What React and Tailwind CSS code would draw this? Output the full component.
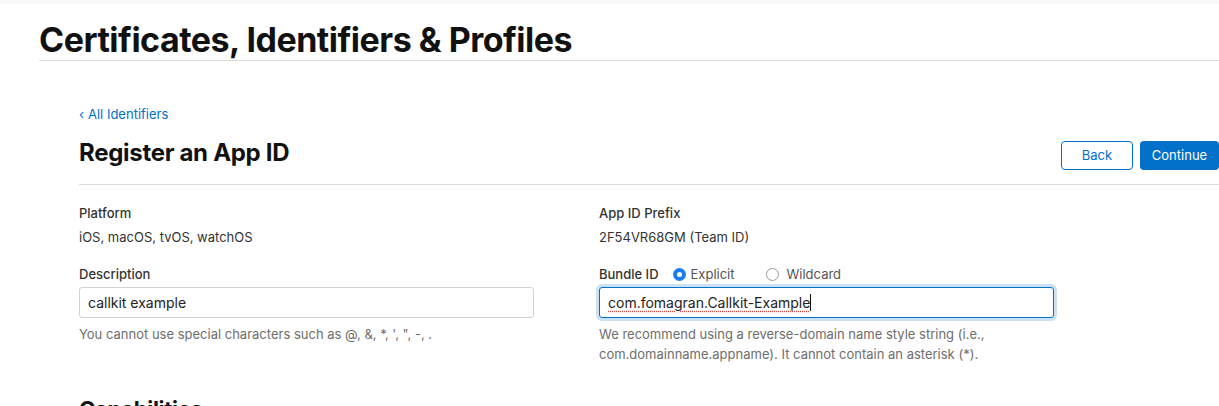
export default function App() {
  return (
    <div className="w-[1219px] h-[406px] overflow-hidden bg-white font-['Inter',sans-serif] text-[#333]">
      <div className="h-[4px] bg-[#f9f9f9]" />
      <div className="pl-[39px]">
        <h1 className="text-[34px] font-bold tracking-[-0.5px] text-[#111] leading-[40px] pt-[16px] pb-[0px]">
          Certificates, Identifiers &amp; Profiles
        </h1>
        <div className="h-px bg-[#dcdcdc]" />
      </div>
      <div className="pl-[79px]">
        <div className="pt-[44px] text-[13px] leading-[18px] text-[#0070c9]">
          <span className="mr-[4px]">‹</span>All Identifiers
        </div>
        <div className="flex items-center justify-between mt-[12px] h-[36px]">
          <h2 className="text-[24px] font-bold text-[#111] tracking-[-0.3px]">Register an App ID</h2>
          <div className="flex gap-[7px] pt-[5px]">
            <button className="w-[72px] h-[29px] rounded-[4px] border border-[#0070c9] text-[#0070c9] text-[13px] bg-white">
              Back
            </button>
            <button className="w-[79px] h-[29px] rounded-[4px] bg-[#0070c9] text-white text-[13px]">
              Continue
            </button>
          </div>
        </div>
        <div className="h-px bg-[#dcdcdc] mt-[13px]" />
        <div className="grid grid-cols-[520px_1fr] pt-[19px]">
          <div>
            <div className="text-[13px] leading-[18px] font-medium text-[#333]">Platform</div>
            <div className="text-[13px] leading-[18px] mt-[6px] text-[#333]">iOS, macOS, tvOS, watchOS</div>
            <div className="text-[13px] leading-[18px] font-medium mt-[19px]">Description</div>
            <div className="mt-[4px] w-[455px] h-[31px] rounded-[3px] border border-[#d2d2d7] flex items-center px-[8px] text-[14px] text-[#222]">
              callkit example
            </div>
            <div className="mt-[6px] text-[13px] leading-[20px] text-[#6e6e6e]">
              You cannot use special characters such as @, &amp;, *, ', ", -, .
            </div>
          </div>
          <div>
            <div className="text-[13px] leading-[18px] font-medium text-[#333]">App ID Prefix</div>
            <div className="text-[13px] leading-[18px] mt-[6px] text-[#333]">2F54VR68GM (Team ID)</div>
            <div className="flex items-center text-[13px] leading-[18px] mt-[19px]">
              <span className="font-medium">Bundle ID</span>
              <span className="ml-[14px] w-[13px] h-[13px] rounded-full bg-[#1a7cf0] flex items-center justify-center">
                <span className="w-[5px] h-[5px] rounded-full bg-white" />
              </span>
              <span className="ml-[5px] text-[#555]">Explicit</span>
              <span className="ml-[31px] w-[13px] h-[13px] rounded-full border border-[#9a9a9a] bg-white" />
              <span className="ml-[8px] text-[#555]">Wildcard</span>
            </div>
            <div className="mt-[4px] w-[455px] h-[31px] rounded-[3px] border border-[#0070c9] shadow-[0_0_0_3px_rgba(0,112,201,0.2)] flex items-center px-[8px] text-[14px] text-[#222]">
              <span className="underline decoration-dotted decoration-[#e0443e] underline-offset-[3px]">com.fomagran.Callkit-Example</span>
              <span className="w-px h-[17px] bg-[#111]" />
            </div>
            <div className="mt-[6px] text-[13px] leading-[20px] text-[#6e6e6e] w-[400px]">
              We recommend using a reverse-domain name style string (i.e., com.domainname.appname). It cannot contain an asterisk (*).
            </div>
          </div>
        </div>
        <h2 className="mt-[31px] text-[22px] leading-[28px] font-bold text-[#111] tracking-[-0.3px]">Capabilities</h2>
      </div>
    </div>
  );
}
